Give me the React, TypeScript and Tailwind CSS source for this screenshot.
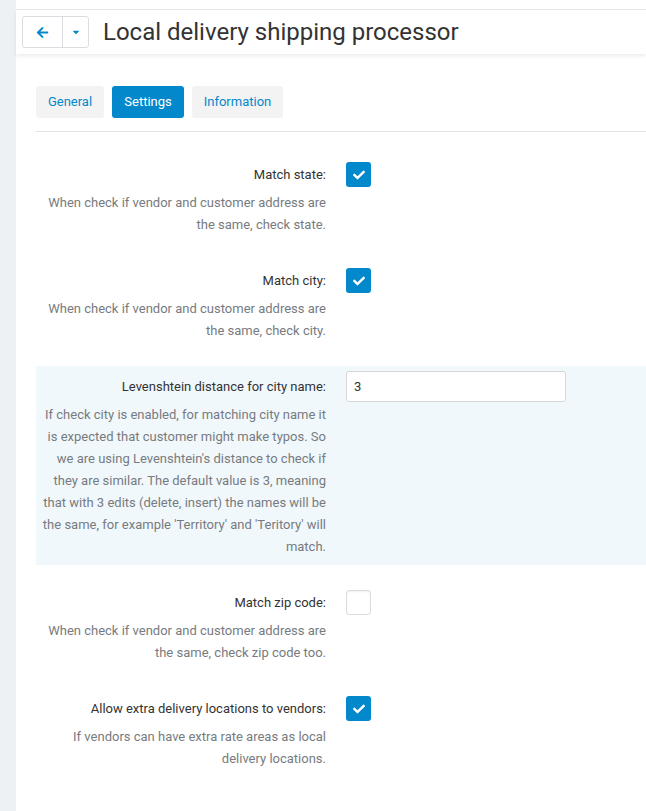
import React from 'react';
import { FaArrowLeft, FaCaretDown, FaCheck } from 'react-icons/fa';

type Setting = {
  label: string;
  help: string;
  kind: 'check' | 'text';
  checked?: boolean;
  value?: string;
  highlight?: boolean;
};

const settings: Setting[] = [
  {
    label: 'Match state:',
    help: 'When check if vendor and customer address are the same, check state.',
    kind: 'check',
    checked: true,
  },
  {
    label: 'Match city:',
    help: 'When check if vendor and customer address are the same, check city.',
    kind: 'check',
    checked: true,
  },
  {
    label: 'Levenshtein distance for city name:',
    help: "If check city is enabled, for matching city name it is expected that customer might make typos. So we are using Levenshtein's distance to check if they are similar. The default value is 3, meaning that with 3 edits (delete, insert) the names will be the same, for example 'Territory' and 'Teritory' will match.",
    kind: 'text',
    value: '3',
    highlight: true,
  },
  {
    label: 'Match zip code:',
    help: 'When check if vendor and customer address are the same, check zip code too.',
    kind: 'check',
    checked: false,
  },
  {
    label: 'Allow extra delivery locations to vendors:',
    help: 'If vendors can have extra rate areas as local delivery locations.',
    kind: 'check',
    checked: true,
  },
];

function Checkbox({ checked }: { checked?: boolean }) {
  if (checked) {
    return (
      <span className="w-[25px] h-[25px] rounded-[3px] bg-[#0388cc] flex items-center justify-center">
        <FaCheck className="text-white w-[12px] h-[12px]" />
      </span>
    );
  }
  return (
    <span className="w-[25px] h-[25px] rounded-[3px] bg-white border border-[#dcdcdc] shadow-[inset_0_1px_2px_rgba(0,0,0,0.06)]" />
  );
}

function SettingRow({ s }: { s: Setting }) {
  return (
    <div className={`flex pt-[5px] pb-[7px] ${s.highlight ? 'bg-[#f1f8fc]' : ''}`}>
      <div className="w-[290px] shrink-0 text-right">
        <div className="h-[31px] flex items-center justify-end text-[13px] text-[#333]">{s.label}</div>
        <p className="mt-[2px] text-[13px] leading-[22px] text-[#777b80]">{s.help}</p>
      </div>
      <div className="ml-[20px] h-[31px] flex items-center">
        {s.kind === 'check' ? (
          <Checkbox checked={s.checked} />
        ) : (
          <input
            type="text"
            defaultValue={s.value}
            className="w-[220px] h-[31px] px-[7px] border border-[#d6d6d6] rounded-[3px] bg-white text-[13px] text-[#333] outline-none"
          />
        )}
      </div>
    </div>
  );
}

export default function App() {
  return (
    <div className="flex min-h-[811px] bg-white font-['Roboto',sans-serif]">
      <div className="w-[16px] shrink-0 bg-[#eef1f4]" />
      <div className="flex-1 min-w-0">
        <div className="h-[10px] border-b border-[#e6e6e6]" />
        <div className="h-[44px] flex items-center pl-[6px] shadow-[0_2px_4px_rgba(0,0,0,0.08)]">
          <div className="flex h-[32px] border border-[#d9dde1] rounded-[3px]">
            <button className="w-[40px] flex items-center justify-center border-r border-[#d9dde1]">
              <FaArrowLeft className="text-[#0388cc] w-[13px] h-[13px]" />
            </button>
            <button className="w-[25px] flex items-center justify-center">
              <FaCaretDown className="text-[#0388cc] w-[10px] h-[10px]" />
            </button>
          </div>
          <h1 className="ml-[14px] text-[24px] text-[#333]">Local delivery shipping processor</h1>
        </div>

        <div className="pl-[20px]">
          <div className="mt-[32px] pb-[13px] border-b border-[#e3e3e3] flex gap-[8px]">
            <button className="h-[32px] w-[68px] rounded-[3px] bg-[#f3f3f3] text-[13px] text-[#0388cc]">General</button>
            <button className="h-[32px] w-[72px] rounded-[3px] bg-[#0388cc] text-[13px] text-white">Settings</button>
            <button className="h-[32px] w-[91px] rounded-[3px] bg-[#f3f3f3] text-[13px] text-[#0388cc]">Information</button>
          </div>

          <div className="mt-[22px] flex flex-col gap-[17px]">
            {settings.map((s) => (
              <SettingRow key={s.label} s={s} />
            ))}
          </div>
        </div>
      </div>
    </div>
  );
}
